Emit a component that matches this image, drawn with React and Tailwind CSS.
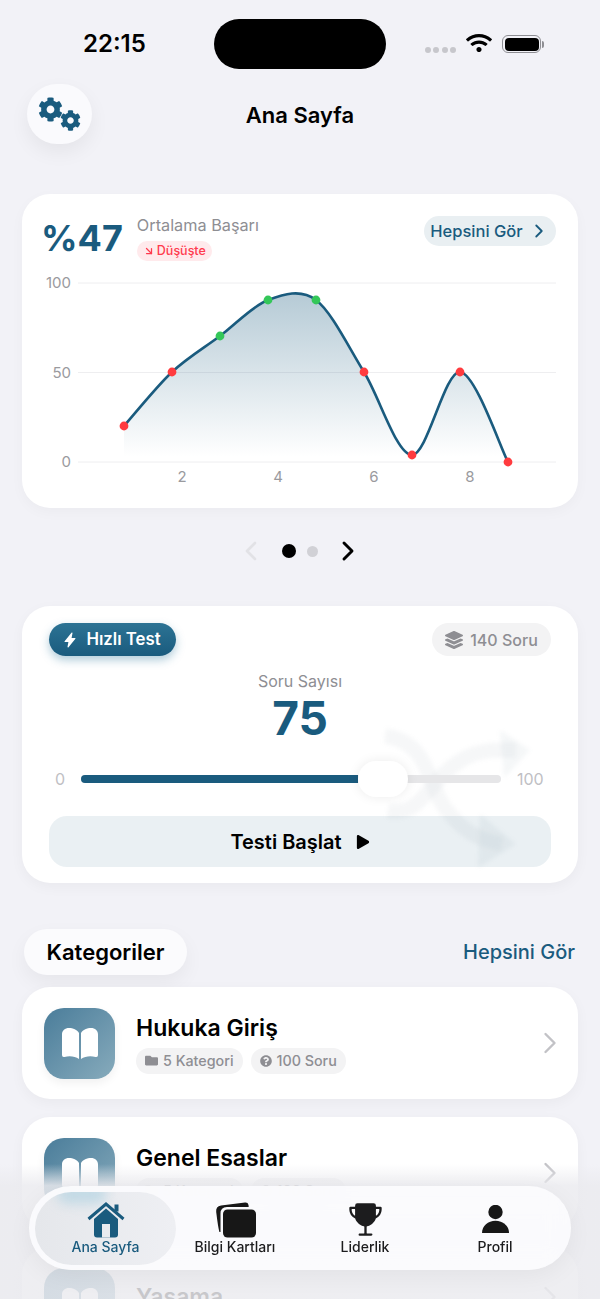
import React from "react";
import { FaWifi, FaLayerGroup, FaFolder, FaQuestionCircle, FaCog, FaPlay } from "react-icons/fa";
import { IoFlash, IoTrophy } from "react-icons/io5";
import { LuChevronRight, LuChevronLeft, LuArrowDownRight } from "react-icons/lu";

const pts = [[124,426],[172,372],[220,336],[268,300],[316,300],[364,372],[412,455],[460,372],[508,462]];
const colors = ["#ff3b3f","#ff3b3f","#34c759","#34c759","#34c759","#ff3b3f","#ff3b3f","#ff3b3f","#ff3b3f"];
const off = 194;
function curve() {
  const p = pts.map(([x, y]) => [x - 22, y - off]);
  let d = `M${p[0][0]} ${p[0][1]}`;
  for (let i = 0; i < p.length - 1; i++) {
    const a = p[Math.max(i - 1, 0)], b = p[i], c = p[i + 1], e = p[Math.min(i + 2, p.length - 1)];
    const t = 0.16;
    d += ` C${b[0] + (c[0] - a[0]) * t} ${b[1] + (c[1] - a[1]) * t} ${c[0] - (e[0] - b[0]) * t} ${c[1] - (e[1] - b[1]) * t} ${c[0]} ${c[1]}`;
  }
  return d;
}
const line = curve();

function Chart() {
  const ys = [[100, 89], [50, 178.5], [0, 268]];
  return (
    <svg width="556" height="314" viewBox="0 0 556 314" className="absolute left-0 top-0">
      <defs>
        <linearGradient id="fill" x1="0" y1="0" x2="0" y2="1">
          <stop offset="0" stopColor="#1a5b7e" stopOpacity="0.32" />
          <stop offset="0.97" stopColor="#1a5b7e" stopOpacity="0" />
        </linearGradient>
      </defs>
      {ys.map(([l, y]) => (
        <g key={l}>
          <line x1="56" x2="534" y1={y} y2={y} stroke="#eeeef0" strokeWidth="1" />
          <text x="49" y={y + 5} textAnchor="end" fontSize="15" fill="#9a9a9e" fontFamily="Inter, sans-serif">{l}</text>
        </g>
      ))}
      {[[2, 160], [4, 256], [6, 352], [8, 448]].map(([l, x]) => (
        <text key={l} x={x} y="288" textAnchor="middle" fontSize="15" fill="#9a9a9e" fontFamily="Inter, sans-serif">{l}</text>
      ))}
      <path d={`${line} L486 268 L102 268 Z`} fill="url(#fill)" />
      <path d={line} fill="none" stroke="#1a5b7e" strokeWidth="2.6" />
      {pts.map(([x, y], i) => (
        <circle key={i} cx={x - 22} cy={y - off} r="4.4" fill={colors[i]} />
      ))}
    </svg>
  );
}

function GearsIcon() {
  return (
    <div className="relative h-[34px] w-[43px]">
      <FaCog size={25} className="absolute left-0 top-0 text-[#1a5b7e]" />
      <FaCog size={21} className="absolute bottom-0 right-0 text-[#1a5b7e]" />
    </div>
  );
}

function BookIcon() {
  return (
    <svg width="36" height="31" viewBox="0 0 36 31" fill="white">
      <path d="M17 5 V31 C13 28 7 27.4 2.5 29 Q0 29.6 0 27 V6.5 C0 2.5 3 0 7 0 C11 0 15 1.5 17 5Z" />
      <path d="M19 5 V31 C23 28 29 27.4 33.5 29 Q36 29.6 36 27 V6.5 C36 2.5 33 0 29 0 C25 0 21 1.5 19 5Z" />
    </svg>
  );
}

function HomeIcon() {
  return (
    <svg width="38" height="37" viewBox="0 0 38 37">
      <path d="M7 18 L19 7.5 L31 18 V33.5 Q31 36.5 28 36.5 H10 Q7 36.5 7 33.5Z" fill="#1a5b7e" />
      <rect x="15" y="23" width="8" height="13.5" fill="#e9ebef" />
      <path d="M1.5 18 L19 3 L36.5 18" fill="none" stroke="#1a5b7e" strokeWidth="3" />
      <rect x="27.5" y="3.5" width="4" height="7" fill="#1a5b7e" />
    </svg>
  );
}

function CardsIcon() {
  return (
    <svg width="41" height="36" viewBox="0 0 41 36">
      <path d="M6 3.5 L30 0.6 Q33 0.3 33.5 3 L33.7 5 L12 5 Q5.5 5 5.5 11.5 L5.5 30 L4.4 30 Q3 25 1.2 10 Q0.6 4.2 6 3.5Z" fill="#171717" />
      <rect x="8" y="7.5" width="33" height="28" rx="4.5" fill="#171717" />
    </svg>
  );
}

function PersonIcon() {
  return (
    <svg width="27" height="28" viewBox="0 0 27 28" className="mb-[5px]" fill="#171717">
      <circle cx="13.5" cy="7" r="7.2" />
      <path d="M0 28 C0 21 6 15.8 13.5 15.8 C21 15.8 27 21 27 28 Z" />
    </svg>
  );
}

function Watermark() {
  return (
    <svg width="556" height="277" viewBox="0 0 556 277" className="absolute left-0 top-0 blur-[2px]" fill="none">
      <g stroke="#7f949e" strokeOpacity="0.07" strokeWidth="15">
        <path d="M363 130 C410 136 405 185 428 208 C442 226 458 234 480 238" />
        <path d="M366 205 C402 210 405 175 438 155 C458 142 478 144 494 144" />
      </g>
      <g fill="#6f8d9e" fillOpacity="0.07">
        <path d="M458 208 L494 238 L456 262 Z" />
        <path d="M478 124 L508 144 L482 172 Z" />
      </g>
    </svg>
  );
}

function Pill({ icon, children }) {
  return (
    <div className="flex h-[26px] items-center gap-[5px] rounded-full bg-[#f3f3f4] px-[9px] text-[14.3px] font-medium text-[#8e8e93]">
      {icon}
      {children}
    </div>
  );
}

function CategoryCard({ title, pills = true }) {
  return (
    <div className={`flex shrink-0 items-center rounded-[28px] bg-white pl-[22px] pr-[10px] shadow-[0_4px_14px_rgba(0,0,0,0.04)] ${pills ? "h-[112px]" : "h-[100px]"}`}>
      <div className={`flex h-[71px] w-[71px] items-center justify-center rounded-[20px] bg-gradient-to-br from-[#4a7d9a] to-[#87abbc] shadow-[0_4px_10px_rgba(0,0,0,0.06)] ${pills ? "" : "self-start mt-[21px]"}`}>
        <BookIcon />
      </div>
      <div className="ml-[21px] flex flex-1 flex-col gap-[5px]">
        <div className="text-[23px] font-semibold leading-[30px] text-black">{title}</div>
        {pills && (
          <div className="flex gap-[8px]">
            <Pill icon={<FaFolder size={13} />}>5 Kategori</Pill>
            <Pill icon={<FaQuestionCircle size={12} />}>100 Soru</Pill>
          </div>
        )}
      </div>
      <LuChevronRight size={36} strokeWidth={1.6} className="text-[#c2c2c6]" />
    </div>
  );
}

function Tab({ icon, label, active }) {
  return (
    <div className={`relative flex h-[73px] flex-col items-center overflow-hidden pt-[9px] ${active ? "mr-[-6px] w-[141px] shrink-0 rounded-[37px] bg-gradient-to-r from-[#e5e7eb] to-[#eeeff3] text-[#1a5b7e]" : "w-[130px] shrink-0 text-[#1c1c1e]"}`}>
      {active && <div className="absolute left-[22px] top-[-8px] h-[20px] w-[50px] rounded-full bg-[#8cc4da]/40 blur-[6px]" />}
      <div className="relative flex h-[37px] items-end">{icon}</div>
      <div className="relative text-[14px] font-medium leading-[18px]">{label}</div>
    </div>
  );
}

export default function App() {
  return (
    <div className="relative h-[1299px] w-[600px] overflow-hidden bg-[#f2f2f7] font-['Inter',sans-serif] text-black">
      <div className="flex h-[84px] items-start">
        <div className="ml-[83px] mt-[29px] text-[24px] font-semibold leading-[30px]">22:15</div>
        <div className="ml-[68px] mt-[19px] h-[50px] w-[172px] rounded-[25px] bg-black" />
        <div className="ml-[39px] mt-[47px] flex gap-[2.5px]">
          <div className="h-[6px] w-[6px] rounded-full bg-[#c7c7cc]" />
          <div className="h-[6px] w-[6px] rounded-full bg-[#c7c7cc]" />
          <div className="h-[6px] w-[6px] rounded-full bg-[#c7c7cc]" />
          <div className="h-[6px] w-[6px] rounded-full bg-[#c7c7cc]" />
        </div>
        <FaWifi size={26} className="ml-[10px] mt-[30px]" />
        <div className="ml-[10px] mt-[35px] flex items-center">
          <div className="h-[18px] w-[39px] rounded-[6px] border-[1.5px] border-[#8e8e93] p-[1.5px]">
            <div className="h-full w-full rounded-[4px] bg-black" />
          </div>
          <div className="ml-[1px] h-[7px] w-[2px] rounded-r-full bg-[#8e8e93]" />
        </div>
      </div>

      <div className="relative flex h-[60px] items-center justify-center">
        <div className="absolute left-[27px] top-0 flex h-[60px] w-[65px] items-center justify-center rounded-full bg-[#fafafd] shadow-[0_8px_20px_rgba(0,0,0,0.06)]">
          <GearsIcon />
        </div>
        <div className="mt-[2px] text-[22px] font-semibold">Ana Sayfa</div>
      </div>

      <div className="mx-[22px] mt-[50px] flex flex-col">
        <div className="relative h-[314px] rounded-[28px] bg-white shadow-[0_4px_14px_rgba(0,0,0,0.03)]">
          <div className="flex items-start pl-[19px] pr-[22px] pt-[20px]">
            <div className="text-[36px] font-bold leading-[48px] text-[#1a5b7e]">%47</div>
            <div className="ml-[14px] flex flex-col items-start">
              <div className="text-[16.25px] leading-[22px] text-[#8e8e93]">Ortalama Başarı</div>
              <div className="mt-[5px] flex h-[20px] items-center gap-[2px] rounded-full bg-[#ffeaec] px-[6px] text-[12.5px] font-medium text-[#ff3b4e]">
                <LuArrowDownRight size={12} strokeWidth={2.5} />
                Düşüşte
              </div>
            </div>
            <div className="ml-auto mt-[2px] flex h-[30px] w-[132px] items-center justify-center gap-[5px] rounded-full bg-[#e9eff2] text-[16.5px] font-medium text-[#1a5b7e]">
              Hepsini Gör
              <LuChevronRight size={22} />
            </div>
          </div>
          <Chart />
        </div>

        <div className="flex h-[98px] items-center pb-[12px] pl-[213px]">
          <LuChevronLeft size={32} strokeWidth={2} className="text-[#e2e2e6]" />
          <div className="ml-[15px] h-[14px] w-[14px] rounded-full bg-black" />
          <div className="ml-[10.5px] h-[11px] w-[11px] rounded-full bg-[#d1d1d6]" />
          <LuChevronRight size={32} strokeWidth={2.2} className="ml-[14.5px] text-black" />
        </div>

        <div className="relative h-[277px] overflow-hidden rounded-[28px] bg-white px-[27px] pt-[17px] shadow-[0_4px_14px_rgba(0,0,0,0.04)]">
          <Watermark />
          <div className="relative flex items-center justify-between">
            <div className="flex h-[33px] w-[127px] items-center justify-center gap-[8px] rounded-full bg-gradient-to-b from-[#2c7394] to-[#1a5b7e] pr-[2px] text-[16.8px] font-semibold text-white shadow-[0_4px_10px_rgba(30,110,150,0.35)]">
              <IoFlash size={16} />
              Hızlı Test
            </div>
            <div className="flex h-[33px] w-[119px] items-center justify-center gap-[7px] rounded-full bg-[#f3f3f4] text-[16px] font-medium text-[#8e8e93]">
              <FaLayerGroup size={18} />
              140 Soru
            </div>
          </div>
          <div className="relative mt-[13px] text-center text-[16px] leading-[24px] text-[#8e8e93]">Soru Sayısı</div>
          <div className="relative text-center text-[46px] font-bold leading-[50px] text-[#1a5b7e]">75</div>
          <div className="relative mt-[18px] flex h-[35px] items-center text-[16px] text-[#c0c0c4]">
            <div className="w-[32px] pl-[6px]">0</div>
            <div className="relative h-[8px] w-[420px] rounded-full bg-[#e6e6e8]">
              <div className="h-full w-[277px] rounded-l-full bg-[#1a5b7e]" />
              <div className="absolute left-[277px] top-[-14px] h-[36px] w-[50px] rounded-[18px] bg-white shadow-[0_0_12px_rgba(0,0,0,0.08)]" />
            </div>
            <div className="ml-[16px]">100</div>
          </div>
          <div className="relative mt-[20px] flex h-[51px] items-center justify-center gap-[14px] rounded-[18px] bg-[#1a5b7e]/[0.09] text-[20px] font-semibold">
            Testi Başlat
            <FaPlay size={14} />
          </div>
        </div>

        <div className="mt-[46px] flex items-center justify-between">
          <div className="ml-[2px] flex h-[46px] w-[163px] items-center justify-center rounded-[23px] bg-[#fbfbfd] text-[22px] font-semibold shadow-[0_8px_20px_rgba(0,0,0,0.05)]">Kategoriler</div>
          <div className="mr-[3px] text-[20px] font-medium text-[#1a5b7e]">Hepsini Gör</div>
        </div>

        <div className="mt-[12px] flex flex-col gap-[18px]">
          <CategoryCard title="Hukuka Giriş" />
          <CategoryCard title="Genel Esaslar" />
          <CategoryCard title="Yasama" pills={false} />
        </div>
      </div>

      <div className="absolute inset-x-0 bottom-0 h-[135px] bg-gradient-to-b from-[#ebebef]/0 via-[#ebebef]/85 via-[16%] to-[#ebebef]/85" />

      <div className="absolute bottom-[29px] left-[29px] flex h-[84px] w-[542px] items-center rounded-[42px] bg-[#fbfbfd]/95 pl-[6px] shadow-[0_6px_24px_rgba(0,0,0,0.05)] backdrop-blur-md">
        <Tab active icon={<HomeIcon />} label="Ana Sayfa" />
        <Tab icon={<CardsIcon />} label="Bilgi Kartları" />
        <Tab icon={<IoTrophy size={37} />} label="Liderlik" />
        <Tab icon={<PersonIcon />} label="Profil" />
      </div>
    </div>
  );
}
